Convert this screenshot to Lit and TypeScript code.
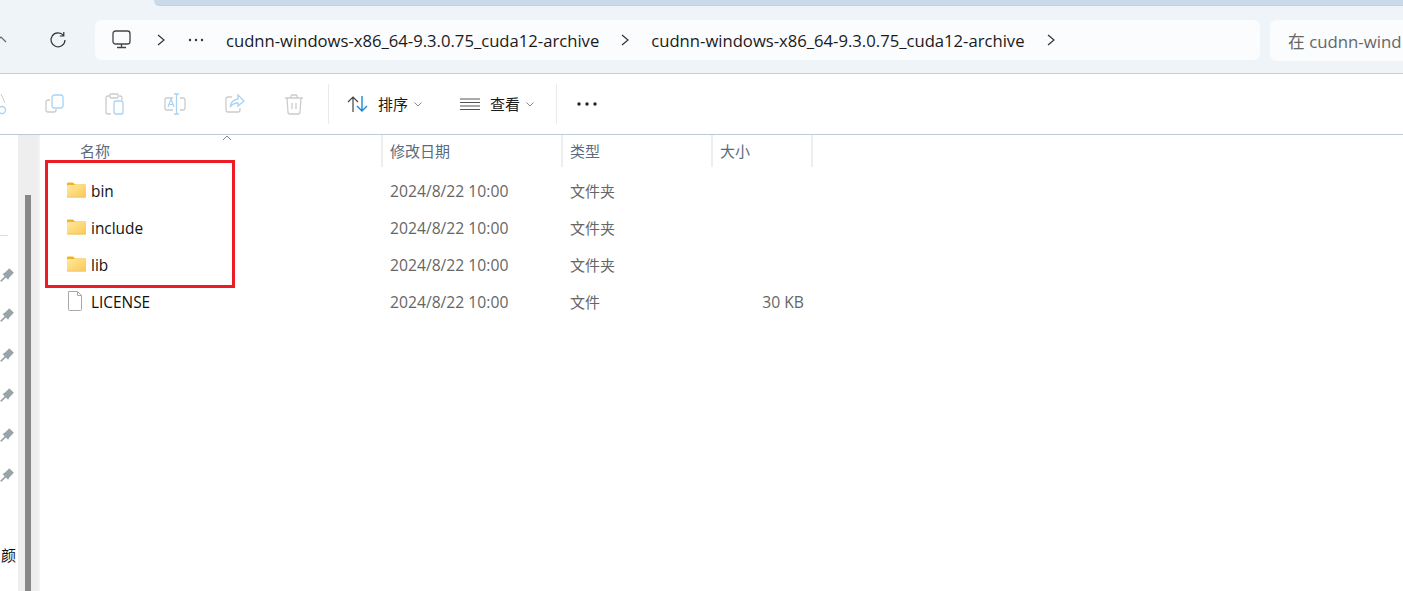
import { LitElement, html, css, svg } from "lit";
import { customElement } from "lit/decorators.js";

const rows = [
  { name: "bin", type: "文件夹", size: "", folder: true },
  { name: "include", type: "文件夹", size: "", folder: true },
  { name: "lib", type: "文件夹", size: "", folder: true },
  { name: "LICENSE", type: "文件", size: "30 KB", folder: false },
];
const chevron = html`<svg class="chev" width="10" height="14" viewBox="0 0 10 14"><path d="M2 2l6 5-6 5" fill="none" stroke="#333" stroke-width="1.2"/></svg>`;
const folder = html`<svg width="19" height="16" viewBox="0 0 19 16"><defs><linearGradient id="fg" x1="0" y1="0" x2="1" y2="1"><stop offset="0" stop-color="#ffe9a0"/><stop offset="1" stop-color="#fbc850"/></linearGradient></defs><path d="M0 1.500q0-1 1-1h5l2 2h10q1 0 1 1V5H0z" fill="#f1b323"/><rect x="0" y="3" width="19" height="12.500" rx="1" fill="url(#fg)"/><rect x="0" y="14.500" width="19" height="1" fill="#ecc77a"/></svg>`;
const fileIcon = html`<svg width="16" height="20" viewBox="0 0 16 20"><path d="M1.500.5h9l4 4v14q0 1-1 1h-11q-1 0-1-1z" fill="#fff" stroke="#a8a8a8"/><path d="M10.500.5v4h4" fill="none" stroke="#a8a8a8"/></svg>`;
const pin = svg`<path d="M1 13l4-4-2-2 2-1 3-3 1-1 4 4-1 1-3 3-1 2-2-2-4 4z" fill="#99a3aa"/>`;

@customElement("app-root")
export class AppRoot extends LitElement {
  static styles = css`
    :host { display: block; width: 1403px; height: 591px; overflow: hidden; background: #fff; font-family: "Open Sans", "Noto Sans CJK SC", sans-serif; }
    .tabstrip { height: 6px; background: #eff4f9; padding-left: 154px; }
    .tab { height: 6px; background: #c9dbea; border-bottom: 1px solid #bfd2e4; border-bottom-left-radius: 6px; box-sizing: border-box; }
    .nav { height: 68px; background: #eff4f9; border-bottom: 1px solid #c4cfd8; box-sizing: border-box; padding-top: 14px; display: flex; align-items: flex-start; }
    .up { width: 10px; height: 40px; display: flex; align-items: center; }
    .refresh { width: 85px; height: 40px; display: flex; align-items: center; padding-left: 39px; box-sizing: border-box; }
    .addr { width: 1165px; height: 40px; background: #fafcfe; border-radius: 6px; display: flex; align-items: center; box-sizing: border-box; padding-left: 17px; font-size: 16.65px; color: #1a1a1a; white-space: nowrap; }
    .addr .mon { margin-right: 24px; display: flex; }
    .addr .dots { margin: 0 22px 0 22px; display: flex; }
    .addr .chev2 { margin-left: 21px; display: flex; }
    .addr .seg2 { margin-left: 21px; }
    .addr .chev3 { margin-left: 21px; display: flex; }
    .search { margin-left: 10px; flex: 1; min-width: 0; height: 41px; background: #fafcfe; border-radius: 6px 0 0 6px; padding-left: 18px; display: flex; align-items: center; font-size: 16.8px; color: #666; white-space: nowrap; overflow: hidden; }
    .search span { flex: none; }
    .toolbar { height: 61px; box-sizing: border-box; border-bottom: 1px solid #b9cbdb; display: flex; align-items: center; background: #fff; font-size: 15px; color: #1a1a1a; }
    .tool { display: flex; align-items: center; justify-content: center; width: 60px; height: 24px; }
    .cut { width: 7px; justify-content: flex-end; margin-right: 18px; }
    .trash { width: 58px; }
    .sep { width: 1px; height: 40px; background: #e8ebee; flex: none; }
    .cmd { display: flex; align-items: center; height: 24px; flex: none; }
    .cmd .label { margin-left: 9px; margin-right: 6px; padding-bottom: 2px; }
    .sort { margin-left: 18px; width: 113px; box-sizing: border-box; }
    .view { width: 96px; box-sizing: border-box; }
    .view .label { margin-left: 10px; }
    .more { margin-left: 20px; display: flex; }
    .main { display: flex; height: 457px; }
    .side { width: 18px; position: relative; overflow: hidden; }
    .side hr { position: absolute; left: 0; top: 100px; width: 8px; margin: 0; border: 0; border-top: 1px solid #ddd; }
    .pins { position: absolute; left: -1px; top: 131px; display: flex; flex-direction: column; gap: 24px; }
    .pins svg { display: block; }
    .cut-char { position: absolute; left: 0; top: 410px; font-size: 15px; color: #111; line-height: 20px; width: 16px; overflow: hidden; direction: rtl; white-space: nowrap; }
    .track { width: 20px; background: #eee; padding-left: 7px; box-sizing: border-box; }
    .thumb { width: 6px; margin-top: 60px; height: 397px; background: #888; }
    .edge { width: 2px; background: #f3f3f3; }
    .list { flex: 1; position: relative; }
    .head { height: 37px; display: grid; grid-template-columns: 343px 180px 150px 100px; font-size: 15px; color: #5a6b80; }
    .cell { border-right: 2px solid #eceef0; box-sizing: border-box; height: 32px; display: flex; align-items: center; padding-left: 7px; padding-bottom: 2px; }
    .first { padding-left: 40px; position: relative; }
    .sort-caret { position: absolute; left: 182px; top: 0; }
    .row { height: 37px; display: grid; grid-template-columns: 343px 180px 150px 91px; align-items: center; color: #666; font-size: 15px; }
    .name { display: flex; align-items: center; color: #111; font-size: 15.4px; }
    .name-text { padding-top: 2px; }
    .ic { width: 51px; display: flex; padding-left: 27px; box-sizing: border-box; flex: none; margin-bottom: 2px; }
    .date { padding-left: 7px; font-size: 15.7px; }
    .type { padding-left: 7px; }
    .size { text-align: right; font-size: 15.7px; }
    .highlight { position: absolute; left: 5px; top: 25px; width: 190px; height: 128px; box-sizing: border-box; border: 3px solid #ed1c24; pointer-events: none; }
  `;

  render() {
    return html`
      <div class="tabstrip"><div class="tab"></div></div>
      <div class="nav">
        <div class="up"><svg width="8" height="12" viewBox="0 0 8 12"><path d="M-4 8l5-5 5 5" fill="none" stroke="#666" stroke-width="1.2"/></svg></div>
        <div class="refresh">
          <svg width="18" height="18" viewBox="0 0 18 18"><path d="M14.500 4.500A7 7 0 1 0 16 9M14.800 1v4h-4" fill="none" stroke="#333" stroke-width="1.2"/></svg>
        </div>
        <div class="addr">
          <span class="mon"><svg width="20" height="20" viewBox="0 0 20 20"><rect x="1" y="1" width="17" height="13" rx="2.500" fill="none" stroke="#444" stroke-width="1.300"/><path d="M9.500 14v3M5 17.500h9" stroke="#444" stroke-width="1.300"/></svg></span>
          ${chevron}
          <span class="dots"><svg width="16" height="4" viewBox="0 0 16 4"><circle cx="2" cy="2" r="1.200" fill="#333"/><circle cx="8" cy="2" r="1.200" fill="#333"/><circle cx="14" cy="2" r="1.200" fill="#333"/></svg></span>
          <span>cudnn-windows-x86_64-9.3.0.75_cuda12-archive</span>
          <span class="chev2">${chevron}</span>
          <span class="seg2">cudnn-windows-x86_64-9.3.0.75_cuda12-archive</span>
          <span class="chev3">${chevron}</span>
        </div>
        <div class="search"><span>在 cudnn-wind</span></div>
      </div>
      <div class="toolbar">
        <div class="tool cut"><svg width="7" height="24" viewBox="13 0 7 24"><path d="M14 2l4 9" stroke="#ccc" fill="none"/><circle cx="15" cy="18" r="3.500" fill="none" stroke="#a9d3f5" stroke-width="1.300"/></svg></div>
        <div class="tool"><svg width="20" height="20" viewBox="0 0 20 20"><path d="M5 6H3q-2 0-2 2v8q0 2 2 2h6q2 0 2-2v-1" fill="none" stroke="#ccc" stroke-width="1.300"/><rect x="7" y="1" width="11" height="13" rx="2.500" fill="none" stroke="#a9d3f5" stroke-width="1.300"/></svg></div>
        <div class="tool"><svg width="20" height="22" viewBox="0 0 20 22"><path d="M5 3H3Q1 3 1 5v14q0 2 2 2h3M14 3h1q2 0 2 2v2" fill="none" stroke="#ccc" stroke-width="1.300"/><rect x="5" y="1" width="8" height="4" rx="1" fill="none" stroke="#ccc" stroke-width="1.300"/><rect x="9" y="8" width="9" height="13" rx="2" fill="none" stroke="#a9d3f5" stroke-width="1.300"/></svg></div>
        <div class="tool"><svg width="22" height="22" viewBox="0 0 22 22"><path d="M9 5H3Q1 5 1 7v8q0 2 2 2h6M16 5h3q2 0 2 2v8q0 2-2 2h-3" fill="none" stroke="#ccc" stroke-width="1.300"/><path d="M10 1h5M10 21h5M12.500 1v20" fill="none" stroke="#a9d3f5" stroke-width="1.300"/><path d="M4 14l3-8 3 8M5 11.500h4" fill="none" stroke="#a9d3f5" stroke-width="1.200"/></svg></div>
        <div class="tool"><svg width="20" height="20" viewBox="0 0 20 20"><path d="M7 3H3Q1 3 1 5v11q0 2 2 2h10q2 0 2-2v-2" fill="none" stroke="#ccc" stroke-width="1.300"/><path d="M13 1l6 6-6 5V9q-5 0-8 4 1-7 8-8z" fill="none" stroke="#a9d3f5" stroke-width="1.300"/></svg></div>
        <div class="tool trash"><svg width="20" height="21" viewBox="0 0 20 21"><path d="M1 4h18M7 4V2q0-1 1-1h4q1 0 1 1v2M3 4l1 14q0 2 2 2h8q2 0 2-2l1-14M8 9v6M12 9v6" fill="none" stroke="#ccc" stroke-width="1.300"/></svg></div>
        <div class="sep" style="margin-left:5px"></div>
        <div class="cmd sort">
          <svg width="22" height="18" viewBox="0 0 22 18"><path d="M6 17V2M1 7l5-5 5 5" fill="none" stroke="#444" stroke-width="1.200"/><path d="M15 1v15M10 11l5 5 5-5" fill="none" stroke="#1e88d8" stroke-width="1.400"/></svg>
          <span class="label">排序</span>
          <svg width="8" height="5" viewBox="0 0 8 5"><path d="M.5.5L4 4 7.500.5" fill="none" stroke="#888"/></svg>
        </div>
        <div class="cmd view">
          <svg width="20" height="12" viewBox="0 0 20 12"><path d="M0 1h20M0 4.500h20M0 8h20M0 11.500h20" stroke="#555" stroke-width="1"/></svg>
          <span class="label">查看</span>
          <svg width="8" height="5" viewBox="0 0 8 5"><path d="M.5.5L4 4 7.500.5" fill="none" stroke="#888"/></svg>
        </div>
        <div class="sep"></div>
        <div class="more"><svg width="20" height="4" viewBox="0 0 20 4"><circle cx="2" cy="2" r="1.700" fill="#222"/><circle cx="10" cy="2" r="1.700" fill="#222"/><circle cx="18" cy="2" r="1.700" fill="#222"/></svg></div>
      </div>
      <div class="main">
        <div class="side">
          <hr />
          <div class="pins">
            ${[0, 1, 2, 3, 4, 5].map(() => html`<svg width="16" height="16" viewBox="0 0 14 14">${pin}</svg>`)}
          </div>
          <div class="cut-char">颜</div>
        </div>
        <div class="track"><div class="thumb"></div></div>
        <div class="edge"></div>
        <div class="list">
          <div class="head">
            <div class="cell first">名称<svg class="sort-caret" width="10" height="6" viewBox="0 0 10 6"><path d="M1 5l4-4 4 4" fill="none" stroke="#888"/></svg></div>
            <div class="cell">修改日期</div>
            <div class="cell">类型</div>
            <div class="cell">大小</div>
          </div>
          ${rows.map(
            (r) => html`<div class="row">
              <div class="name"><span class="ic">${r.folder ? folder : fileIcon}</span><span class="name-text">${r.name}</span></div>
              <div class="date">2024/8/22 10:00</div>
              <div class="type">${r.type}</div>
              <div class="size">${r.size}</div>
            </div>`
          )}
          <div class="highlight"></div>
        </div>
      </div>
    `;
  }
}
